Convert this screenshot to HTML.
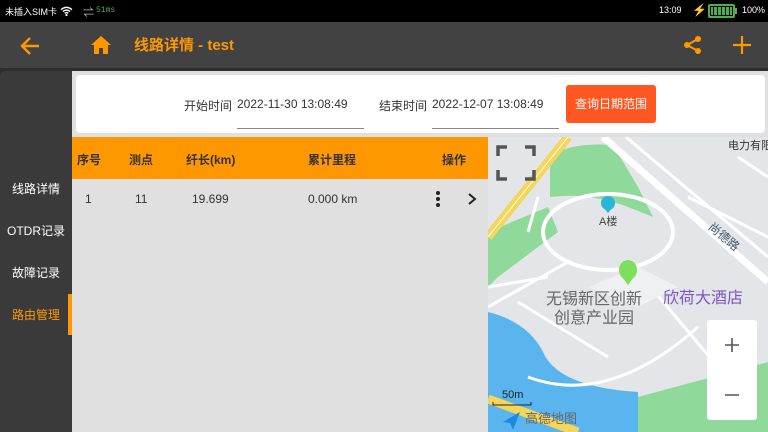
<!DOCTYPE html>
<html><head><meta charset="utf-8"><style>
*{margin:0;padding:0;box-sizing:border-box}
body{width:768px;height:432px;overflow:hidden;background:#2e2e2e;font-family:"Liberation Sans","Noto Sans CJK SC",sans-serif;position:relative}
.abs{position:absolute;white-space:nowrap}
</style></head><body>
<div class="abs" style="left:0;top:0;width:768px;height:22px;background:#000;color:#fff;font-size:9px">
 <span class="abs" style="left:5px;top:5px">未插入SIM卡</span>
 <svg class="abs" style="left:60px;top:6px" width="13" height="10" viewBox="0 0 14 11"><path d="M1 4Q7-1 13 4M3 6Q7 3 11 6M5 8Q7 6.5 9 8" stroke="#fff" stroke-width="1.6" fill="none"/><circle cx="7" cy="10" r="1.2" fill="#fff"/></svg>
 <span class="abs" style="left:83px;top:4px;color:#bbb;font-size:11px">⇌</span>
 <span class="abs" style="left:96px;top:6px;color:#4caf50;font-size:8px;font-family:'Liberation Mono',monospace">51ms</span>
 <span class="abs" style="left:659px;top:5px">13:09</span>
 <span class="abs" style="left:692px;top:3px;font-size:12px">⚡</span>
 <div class="abs" style="left:708px;top:4px;width:27px;height:14px;border:2px solid #4caf50;border-radius:2px;background:repeating-linear-gradient(90deg,#4caf50 0 3px,#000 3px 4px);background-clip:content-box;padding:1px"></div>
 <div class="abs" style="left:735px;top:8px;width:2px;height:6px;background:#4caf50"></div>
 <span class="abs" style="left:742px;top:5px">100%</span>
</div>
<div class="abs" style="left:0;top:22px;width:768px;height:46px;background:#424242"></div>
<svg class="abs" style="left:19px;top:35px" width="22" height="22" viewBox="0 0 22 22"><path d="M20 11H3M11 3L3 11L11 19" stroke="#ff9800" stroke-width="2.4" fill="none"/></svg>
<svg class="abs" style="left:90px;top:35px" width="22" height="20" viewBox="0 0 22 20"><path d="M11 1L1 10H4V19H9V13H13V19H18V10H21Z" fill="#ff9800"/></svg>
<div class="abs" style="left:134px;top:37px;color:#ff9800;font-size:15px;font-weight:bold;line-height:18px">线路详情 - test</div>
<svg class="abs" style="left:683px;top:35px" width="20" height="20" viewBox="0 0 20 20"><circle cx="15" cy="4" r="3" fill="#ff9800"/><circle cx="4" cy="10" r="3" fill="#ff9800"/><circle cx="15" cy="16" r="3" fill="#ff9800"/><path d="M15 4L4 10L15 16" stroke="#ff9800" stroke-width="2" fill="none"/></svg>
<svg class="abs" style="left:733px;top:36px" width="18" height="18" viewBox="0 0 18 18"><path d="M9 0V18M0 9H18" stroke="#ff9800" stroke-width="2.2"/></svg>
<div class="abs" style="left:0;top:71px;width:72px;height:361px;background:#3a3a3a;border-top-left-radius:6px"></div>
<div class="abs" style="left:72px;top:71px;width:696px;height:361px;background:#e0e0e0"></div>
<div class="abs" style="left:0;top:180px;width:72px;text-align:center;color:#fff;font-size:12px">线路详情</div>
<div class="abs" style="left:0;top:222px;width:72px;text-align:center;color:#fff;font-size:12px">OTDR记录</div>
<div class="abs" style="left:0;top:264px;width:72px;text-align:center;color:#fff;font-size:12px">故障记录</div>
<div class="abs" style="left:0;top:306px;width:72px;text-align:center;color:#ff9800;font-size:12px">路由管理</div>
<div class="abs" style="left:68px;top:294px;width:4px;height:41px;background:#ff9800"></div>
<div class="abs" style="left:76px;top:75px;width:689px;height:58px;background:#fff;border-radius:4px"></div>
<div class="abs" style="left:184px;top:97px;font-size:12px;color:#333">开始时间</div>
<div class="abs" style="left:237px;top:97px;font-size:12px;color:#333">2022-11-30 13:08:49</div>
<div class="abs" style="left:237px;top:128px;width:127px;height:1px;background:#888"></div>
<div class="abs" style="left:379px;top:97px;font-size:12px;color:#333">结束时间</div>
<div class="abs" style="left:432px;top:97px;font-size:12px;color:#333">2022-12-07 13:08:49</div>
<div class="abs" style="left:432px;top:128px;width:127px;height:1px;background:#888"></div>
<div class="abs" style="left:566px;top:85px;width:90px;height:38px;background:#ff5722;border-radius:3px;color:#fff;font-size:12px;line-height:38px;text-align:center">查询日期范围</div>
<div class="abs" style="left:72px;top:137px;width:416px;height:42px;background:#ff9800"></div>
<div class="abs" style="left:72px;top:151px;font-size:12px;font-weight:bold;color:#333;width:416px;height:14px">
 <span class="abs" style="left:5px">序号</span><span class="abs" style="left:57px">测点</span><span class="abs" style="left:114px">纤长(km)</span><span class="abs" style="left:236px">累计里程</span><span class="abs" style="left:370px">操作</span>
</div>
<div class="abs" style="left:72px;top:192px;font-size:12px;color:#333;width:416px;height:14px">
 <span class="abs" style="left:13px">1</span><span class="abs" style="left:63px">11</span><span class="abs" style="left:120px">19.699</span><span class="abs" style="left:236px">0.000 km</span>
</div>
<svg class="abs" style="left:434px;top:190px" width="8" height="18"><circle cx="4" cy="3" r="2" fill="#222"/><circle cx="4" cy="9" r="2" fill="#222"/><circle cx="4" cy="15" r="2" fill="#222"/></svg>
<svg class="abs" style="left:467px;top:192px" width="10" height="14"><path d="M2 2L8 7L2 12" stroke="#222" stroke-width="2" fill="none"/></svg>
<svg class="abs" style="left:488px;top:137px" width="280" height="295" viewBox="0 0 280 295">
 <rect width="280" height="295" fill="#e3e5e9"/>
 <path d="M62 20Q80 5 125 8L150 50L165 80L140 70Q100 55 62 60Z" fill="#8fd99b"/>
 <path d="M0 95L60 70L70 95L10 140L0 150Z" fill="#8fd99b"/>
 <path d="M0 175Q40 185 55 215Q70 250 150 255L150 295L0 295Z" fill="#5ab4ee"/>
 <path d="M150 260L280 225L280 295L150 295Z" fill="#8fd99b"/>
 <path d="M0 100L80 0" stroke="#f5d55a" stroke-width="9"/>
 <path d="M0 100L80 0" stroke="#fff" stroke-width="1"/>
 <path d="M0 262L90 295" stroke="#f5d55a" stroke-width="9"/>
 <path d="M115 0L280 145" stroke="#fff" stroke-width="7"/>
 <path d="M138 0L280 120" stroke="#fff" stroke-width="3"/>
 <ellipse cx="120" cy="95" rx="65" ry="38" fill="none" stroke="#fff" stroke-width="4"/>
 <path d="M0 150L60 140M0 170L80 125M30 165L120 220M40 240Q120 270 210 190M150 135L230 230M50 60L40 95M200 60L280 100M250 20L280 40" stroke="#fff" stroke-width="3" fill="none"/>
 <path d="M100 150L150 130L190 150L150 170Z" fill="#eef0f2"/>
 <path d="M10 19V10H19M10 33V42H19M37 10H46V19M46 33V42H37" stroke="#555" stroke-width="3.5" fill="none"/>
 <circle cx="120" cy="66" r="7" fill="#29b6d8"/>
 <path d="M115 70L120 76L125 70Z" fill="#29b6d8"/>
 <text x="111" y="88" font-size="11" fill="#444">A楼</text>
 <text x="240" y="12" font-size="11" fill="#333">电力有限</text>
 <text x="212" y="98" font-size="12" fill="#456" transform="rotate(40 225 105)">尚德路</text>
 <ellipse cx="140" cy="133" rx="9" ry="10" fill="#7ce05c"/>
 <path d="M132 137L140 148L148 137Z" fill="#7ce05c"/>
 <text x="58" y="167" font-size="16" fill="#666">无锡新区创新</text>
 <text x="66" y="186" font-size="16" fill="#666">创意产业园</text>
 <text x="175" y="166" font-size="16" fill="#7e57c2">欣荷大酒店</text>
 <text x="14" y="261" font-size="11" fill="#222">50m</text>
 <path d="M5 265V268H43V265" stroke="#222" fill="none"/>
 <path d="M15 285L32 275L25 293L22 286Z" fill="#1e88e5"/>
 <text x="37" y="286" font-size="13" fill="#666">高德地图</text>
 <rect x="219" y="183" width="50" height="100" rx="3" fill="#fff"/>
 <path d="M237 208H251M244 201V215M237 258H251" stroke="#555" stroke-width="1.6"/>
</svg>
</body></html>
